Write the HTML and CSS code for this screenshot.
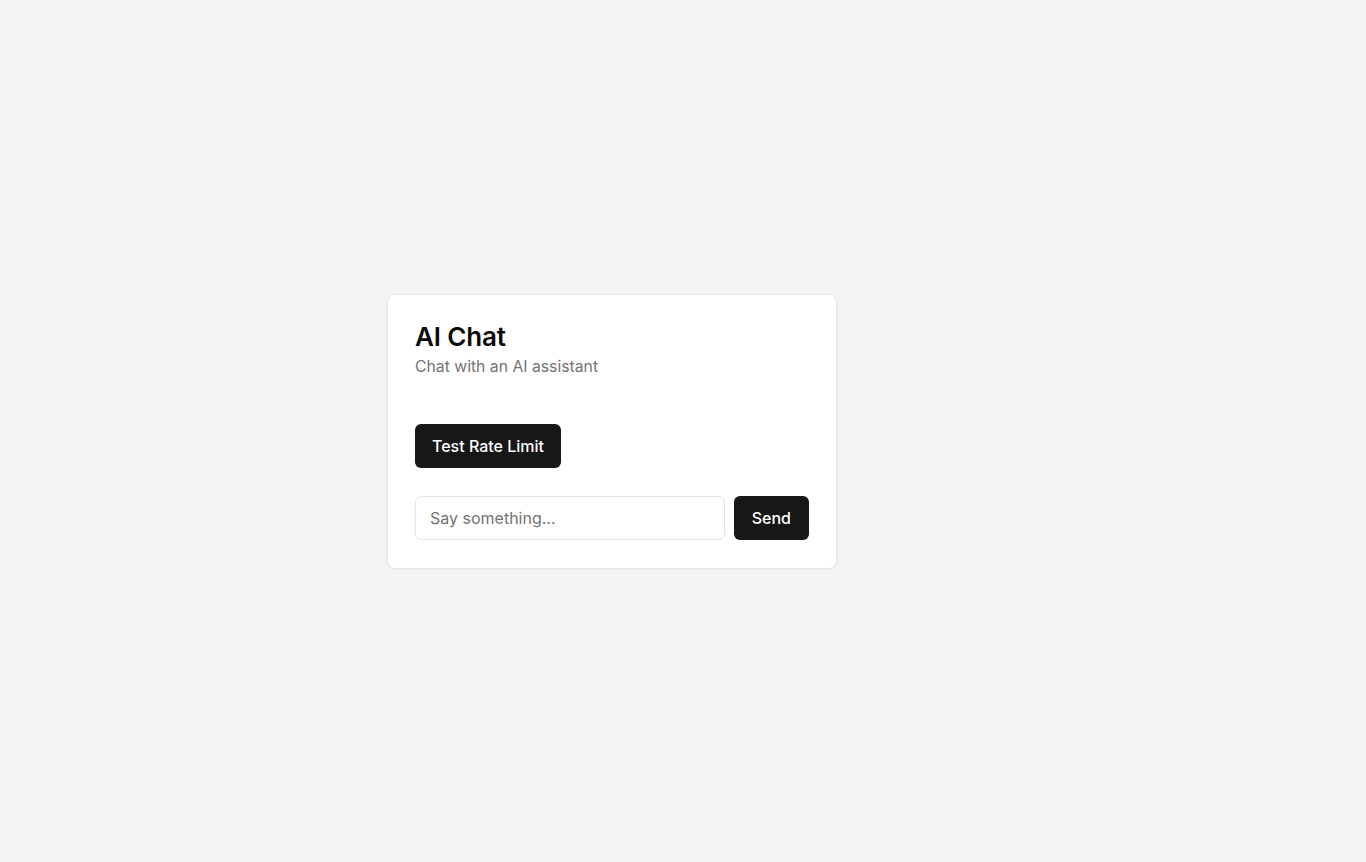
FILE: index.html
```html
<!DOCTYPE html>
<html lang="en">
<head>
<meta charset="utf-8">
<title>AI Chat</title>
<link rel="stylesheet" href="styles.css">
</head>
<body>
<main class="page">
  <section class="card">
    <header class="card-header">
      <h1 class="title">AI Chat</h1>
      <p class="subtitle">Chat with an AI assistant</p>
    </header>
    <div class="actions">
      <button class="btn" type="button">Test Rate Limit</button>
    </div>
    <form class="composer" onsubmit="return false">
      <input class="input" type="text" placeholder="Say something...">
      <button class="btn btn-send" type="submit">Send</button>
    </form>
  </section>
</main>
</body>
</html>
```
FILE: styles.css
```css
* { box-sizing: border-box; }
html, body { margin: 0; padding: 0; }
body {
  background: #f3f4f6;
  font-family: Inter, "Noto Sans", sans-serif;
  color: #0a0a0a;
}
.page {
  min-height: 100vh;
  display: flex;
  align-items: center;
  padding-left: 387px;
}
.card {
  width: 450px;
  background: #ffffff;
  border: 1px solid #e5e5e5;
  border-radius: 8px;
  box-shadow: 0 1px 2px rgba(0,0,0,0.05);
  padding: 26px 27px 28px 27px;
}
.card-header { display: flex; flex-direction: column; }
.title {
  margin: 0;
  font-size: 26px;
  line-height: 32px;
  font-weight: 600;
  letter-spacing: -0.15px;
  color: #0a0a0a;
}
.subtitle {
  margin: 2px 0 0;
  font-size: 15.75px;
  line-height: 24px;
  color: #737373;
}
.actions {
  margin-top: 45px;
  display: flex;
}
.btn {
  height: 44px;
  padding: 0 17px;
  border: none;
  border-radius: 6px;
  background: #171717;
  color: #ffffff;
  font-family: inherit;
  font-size: 16px;
  font-weight: 550;
  cursor: pointer;
}
.composer {
  margin-top: 28px;
  display: flex;
  gap: 9px;
}
.input {
  flex: 1;
  min-width: 0;
  height: 44px;
  border: 1px solid #e5e5e5;
  border-radius: 6px;
  padding: 0 14px;
  font-family: inherit;
  font-size: 16px;
  color: #0a0a0a;
  background: #fff;
  outline: none;
}
.input::placeholder { color: #737373; }
.btn-send { padding: 0 18px; }
```
